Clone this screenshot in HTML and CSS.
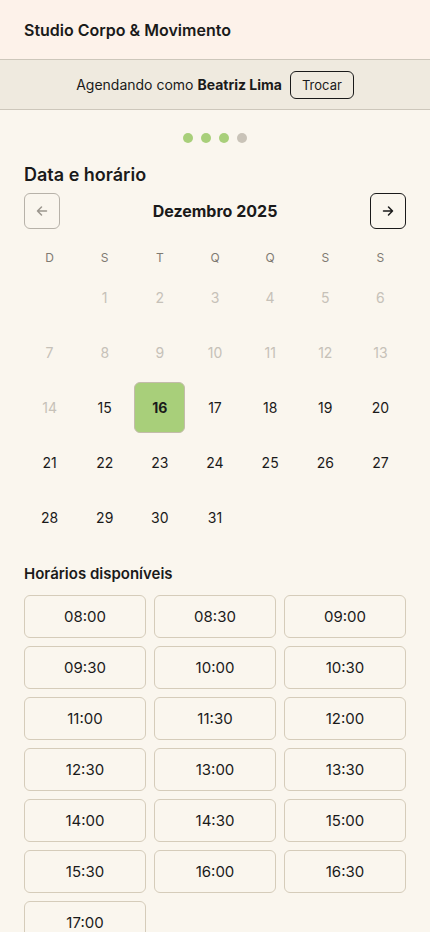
FILE: index.html
```html
<!DOCTYPE html>
<html lang="pt-BR">
<head>
<meta charset="utf-8">
<meta name="viewport" content="width=device-width, initial-scale=1">
<title>Studio Corpo &amp; Movimento</title>
<link rel="stylesheet" href="styles.css">
</head>
<body>
<header class="topbar">
  <h1 class="brand">Studio Corpo &amp; Movimento</h1>
</header>
<div class="userbar">
  <span>Agendando como <strong>Beatriz Lima</strong></span>
  <button class="swap">Trocar</button>
</div>
<main class="content">
  <div class="steps">
    <span class="dot on"></span><span class="dot on"></span><span class="dot on"></span><span class="dot"></span>
  </div>
  <h2 class="section-title">Data e horário</h2>
  <div class="monthnav">
    <button class="navbtn disabled" aria-label="Mês anterior">
      <svg width="16" height="16" viewBox="0 0 16 16" fill="none" stroke="currentColor" stroke-width="1.5" stroke-linecap="round" stroke-linejoin="round"><path d="M12.5 8H3.5M7.5 4L3.5 8L7.5 12"/></svg>
    </button>
    <div class="month">Dezembro 2025</div>
    <button class="navbtn" aria-label="Próximo mês">
      <svg width="16" height="16" viewBox="0 0 16 16" fill="none" stroke="currentColor" stroke-width="1.5" stroke-linecap="round" stroke-linejoin="round"><path d="M3.5 8H12.5M8.5 4L12.5 8L8.5 12"/></svg>
    </button>
  </div>
  <div class="weekdays">
    <span>D</span><span>S</span><span>T</span><span>Q</span><span>Q</span><span>S</span><span>S</span>
  </div>
  <div class="days">
    <span class="day empty"></span>
    <span class="day past">1</span><span class="day past">2</span><span class="day past">3</span><span class="day past">4</span><span class="day past">5</span><span class="day past">6</span>
    <span class="day past">7</span><span class="day past">8</span><span class="day past">9</span><span class="day past">10</span><span class="day past">11</span><span class="day past">12</span><span class="day past">13</span>
    <span class="day past">14</span><span class="day">15</span><span class="day selected">16</span><span class="day">17</span><span class="day">18</span><span class="day">19</span><span class="day">20</span>
    <span class="day">21</span><span class="day">22</span><span class="day">23</span><span class="day">24</span><span class="day">25</span><span class="day">26</span><span class="day">27</span>
    <span class="day">28</span><span class="day">29</span><span class="day">30</span><span class="day">31</span>
  </div>
  <h3 class="slots-title">Horários disponíveis</h3>
  <div class="slots">
    <button class="slot">08:00</button><button class="slot">08:30</button><button class="slot">09:00</button>
    <button class="slot">09:30</button><button class="slot">10:00</button><button class="slot">10:30</button>
    <button class="slot">11:00</button><button class="slot">11:30</button><button class="slot">12:00</button>
    <button class="slot">12:30</button><button class="slot">13:00</button><button class="slot">13:30</button>
    <button class="slot">14:00</button><button class="slot">14:30</button><button class="slot">15:00</button>
    <button class="slot">15:30</button><button class="slot">16:00</button><button class="slot">16:30</button>
    <button class="slot">17:00</button>
  </div>
</main>
</body>
</html>
```
FILE: styles.css
```css
* { box-sizing: border-box; }
html, body { margin: 0; padding: 0; }
body {
  font-family: Inter, "Noto Sans", "Liberation Sans", sans-serif;
  background: #faf6ee;
  color: #1a1a1a;
}
button { font-family: inherit; color: inherit; cursor: pointer; }

.topbar {
  height: 60px;
  background: #fdf2ea;
  border-bottom: 1px solid #cdc7bb;
  display: flex;
  align-items: center;
  padding: 0 24px;
}
.brand {
  margin: 0;
  font-size: 16px;
  font-weight: 600;
  line-height: 20px;
}

.userbar {
  height: 50px;
  background: #efeadf;
  border-bottom: 1px solid #cdc7bb;
  display: flex;
  align-items: center;
  justify-content: center;
  gap: 8px;
  font-size: 14px;
}
.userbar strong { font-weight: 700; }
.swap {
  height: 28px;
  padding: 0 11px;
  background: transparent;
  border: 1px solid #1a1a1a;
  border-radius: 6px;
  font-size: 13px;
}

.content { padding: 0 24px 24px; }

.steps {
  display: flex;
  justify-content: center;
  gap: 8px;
  margin-top: 23px;
}
.dot {
  width: 10px;
  height: 10px;
  border-radius: 50%;
  background: #c9c3b8;
}
.dot.on { background: #a8cf7a; }

.section-title {
  margin: 20px 0 0;
  font-size: 18px;
  font-weight: 600;
  line-height: 24px;
}

.monthnav {
  margin-top: 6px;
  display: flex;
  align-items: center;
  justify-content: space-between;
}
.navbtn {
  width: 36px;
  height: 36px;
  padding: 0;
  border: 1px solid #1a1a1a;
  border-radius: 6px;
  background: transparent;
  display: flex;
  align-items: center;
  justify-content: center;
}
.navbtn.disabled {
  border-color: #b7b2a9;
  color: #9b968d;
}
.month {
  font-size: 16px;
  font-weight: 700;
}

.weekdays {
  margin-top: 18px;
  display: grid;
  grid-template-columns: repeat(7, 1fr);
  column-gap: 4px;
  height: 20px;
  align-items: center;
  text-align: center;
  font-size: 12px;
  color: #7f7a72;
}

.days {
  margin-top: 5px;
  display: grid;
  grid-template-columns: repeat(7, 1fr);
  grid-auto-rows: 51px;
  gap: 4px;
}
.day {
  display: flex;
  align-items: center;
  justify-content: center;
  font-size: 14px;
  border-radius: 6px;
  border: 1px solid transparent;
}
.day.past { color: #c6c1b8; }
.day.selected {
  background: #a8cf7a;
  border-color: #c3bcaa;
  font-weight: 700;
}

.slots-title {
  margin: 21px 0 0;
  font-size: 15px;
  font-weight: 600;
  line-height: 20px;
}

.slots {
  margin-top: 11px;
  display: grid;
  grid-template-columns: repeat(3, 1fr);
  grid-auto-rows: 43px;
  gap: 8px;
}
.slot {
  background: transparent;
  border: 1px solid #d5ccba;
  border-radius: 6px;
  font-size: 15px;
  padding: 0;
}
```
